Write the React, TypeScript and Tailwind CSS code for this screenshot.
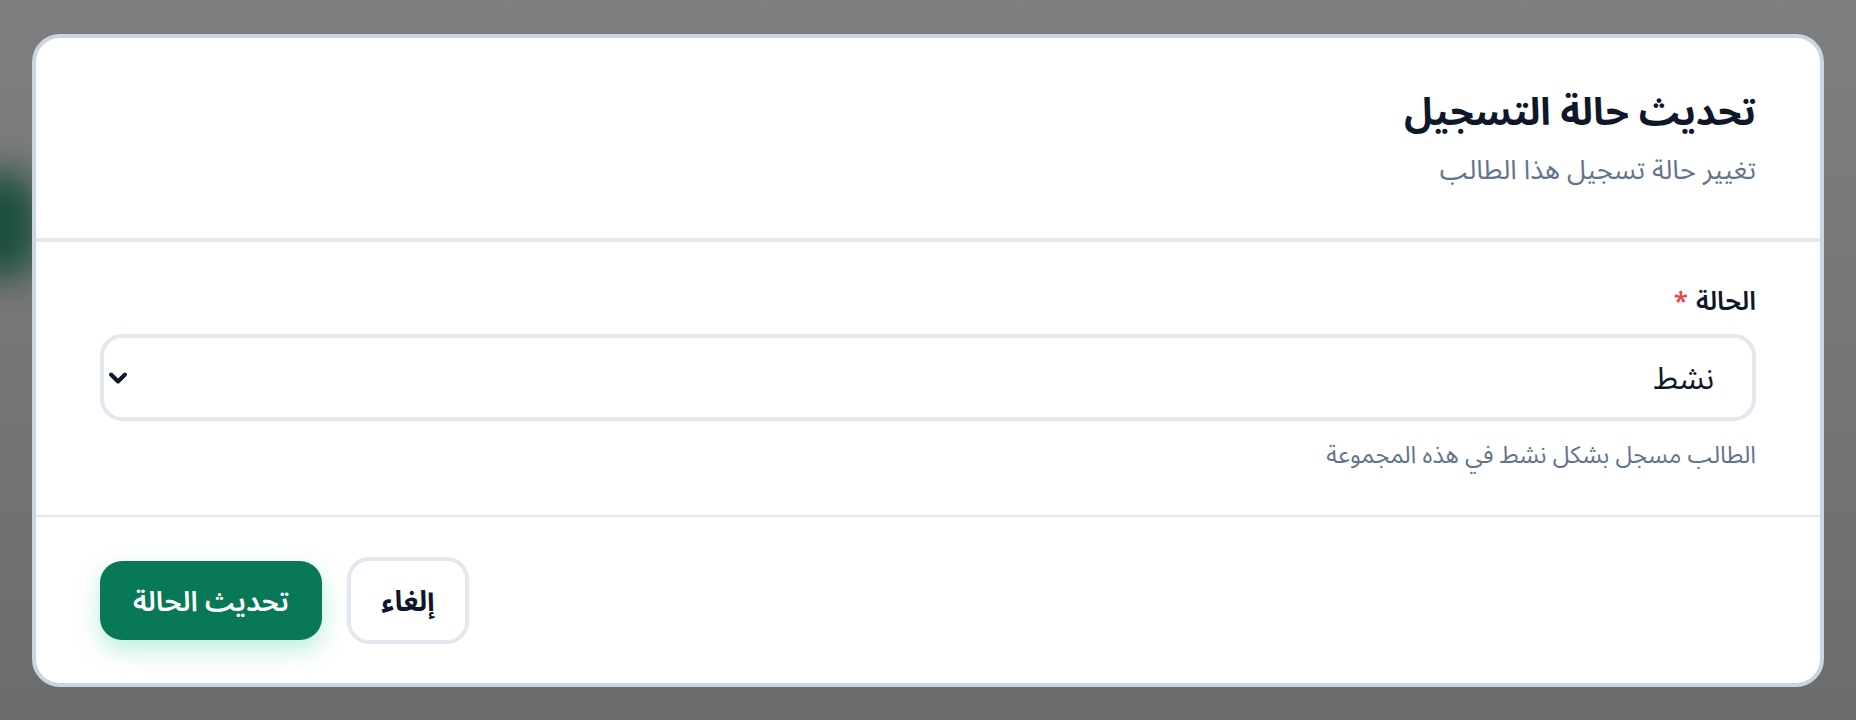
import React from 'react';

const StatusDialog: React.FC = () => {
  return (
    <div
      dir="rtl"
      className="relative mx-auto w-[1792px] h-[653px] flex flex-col bg-white border-4 border-[#cbd5e1] rounded-[28px] overflow-hidden"
    >
      {/* Header */}
      <div className="h-[204px] px-16 pt-[44px] border-b-4 border-[#e2e8f0]">
        <h2 className="text-[38px] leading-[57px] font-bold text-[#0f172a]">تحديث حالة التسجيل</h2>
        <p className="mt-[10px] text-[27px] leading-[40px] text-[#64748b]">تغيير حالة تسجيل هذا الطالب</p>
      </div>

      {/* Body */}
      <div className="h-[275px] px-16 pt-[39px] border-b-2 border-[#e2e8f0]">
        <label className="flex items-center gap-2 text-[26px] leading-[39px] font-semibold text-[#0f172a]">
          الحالة
          <span className="text-[#ef4444]">*</span>
        </label>
        <div className="relative mt-[14px]">
          <select
            defaultValue="active"
            className="block w-full h-[87px] appearance-none bg-white border-4 border-[#e2e8f0] rounded-[22px] pr-[38px] pl-[48px] text-[31px] text-[#0f172a] outline-none"
          >
            <option value="active">نشط</option>
            <option value="inactive">غير نشط</option>
            <option value="completed">مكتمل</option>
          </select>
          <svg
            className="pointer-events-none absolute left-[6px] top-1/2 -translate-y-1/2"
            width="24"
            height="24"
            viewBox="0 0 24 24"
            fill="none"
            stroke="#0f172a"
            strokeWidth="4"
            strokeLinecap="round"
            strokeLinejoin="round"
          >
            <path d="M5 8.5l7 7 7-7" />
          </svg>
        </div>
        <p className="mt-[15px] text-[24px] leading-[36px] text-[#64748b]">الطالب مسجل بشكل نشط في هذه المجموعة</p>
      </div>

      {/* Footer */}
      <div className="flex-1 flex items-center gap-[25px] px-16">
        <div className="flex-1" />
        <button className="h-[87px] w-[122px] bg-white border-4 border-[#e2e8f0] rounded-[22px] text-[28px] font-bold text-[#0f172a]">
          إلغاء
        </button>
        <button className="h-[79px] w-[222px] bg-[#087857] rounded-[22px] text-[28px] font-semibold text-white shadow-[0_10px_24px_rgba(16,185,129,0.28)]">
          تحديث الحالة
        </button>
      </div>
    </div>
  );
};

const App: React.FC = () => {
  return (
    <div
      className="relative h-[720px] w-full overflow-hidden bg-gradient-to-b from-[#7f7f7f] to-[#6c6c6c] pt-[34px]"
      style={{ fontFamily: '"Noto Sans", "Noto Sans Arabic", "DejaVu Sans", sans-serif' }}
    >
      {/* blurred page behind the overlay */}
      <div className="absolute left-[-40px] top-[170px] w-[80px] h-[110px] rounded-full bg-[#0f4a36] blur-[18px] opacity-90" />
      <div className="relative">
        <StatusDialog />
      </div>
    </div>
  );
};

export default App;
